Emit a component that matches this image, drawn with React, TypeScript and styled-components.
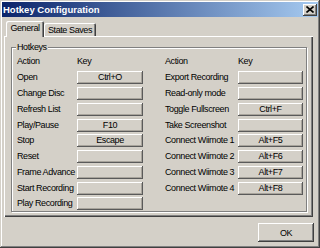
import React from 'react';
import styled, { createGlobalStyle } from 'styled-components';

const Global = createGlobalStyle`
  html, body { margin: 0; padding: 0; background: #d4d0c8; }
  body { font-family: "Liberation Sans", Arial, sans-serif; }
`;

const Window = styled.div`
  box-sizing: border-box;
  width: 320px;
  height: 248px;
  padding: 2px;
  display: flex;
  flex-direction: column;
  background: #d4d0c8;
  color: #000;
  font-size: 9px;
  letter-spacing: -0.4px;
  box-shadow: inset -1px -1px #404040, inset 1px 1px #d4d0c8, inset -2px -2px #808080, inset 2px 2px #ffffff;
`;

const TitleBar = styled.div`
  height: 15px;
  flex: 0 0 15px;
  display: flex;
  align-items: center;
  justify-content: space-between;
  padding: 0 1px;
  background: linear-gradient(to right, #0a246a, #a6caf0);
`;

const Title = styled.span`
  color: #fff;
  font-weight: bold;
  font-size: 9.5px;
  letter-spacing: 0;
  line-height: 15px;
`;

const CloseButton = styled.div`
  box-sizing: border-box;
  width: 14px;
  height: 12px;
  display: flex;
  align-items: center;
  justify-content: center;
  background: #d4d0c8;
  box-shadow: inset -1px -1px #404040, inset 1px 1px #ffffff, inset -2px -2px #808080;
`;

const Content = styled.div`
  display: flex;
  flex-direction: column;
  padding: 4px 5px 0 2px;
`;

const TabStrip = styled.div`
  height: 15px;
  display: flex;
  align-items: flex-end;
  padding-left: 2px;
`;

const Tab = styled.div<{ $active?: boolean; $w: number }>`
  box-sizing: border-box;
  width: ${(p) => p.$w}px;
  height: ${(p) => (p.$active ? 16 : 13)}px;
  margin-bottom: ${(p) => (p.$active ? -1 : 0)}px;
  position: relative;
  z-index: ${(p) => (p.$active ? 2 : 1)};
  display: flex;
  align-items: center;
  justify-content: center;
  padding-bottom: ${(p) => (p.$active ? 2 : 0)}px;
  background: #d4d0c8;
  border-radius: 2px 2px 0 0;
  box-shadow: inset 1px 1px #ffffff, inset -1px 0 #404040, inset -2px 0 #808080;
`;

const Panel = styled.div`
  box-sizing: border-box;
  height: 181px;
  padding: 11px 6px 5px 7px;
  box-shadow: inset 1px 1px #ffffff, inset -1px -1px #404040, inset -2px -2px #808080;
`;

const GroupBox = styled.div`
  box-sizing: border-box;
  position: relative;
  height: 165px;
  border: 1px solid #808080;
  box-shadow: inset 1px 1px #ffffff, 1px 1px #ffffff;
  padding: 4.5px 0 0 5px;
  display: flex;
  gap: 22px;
`;

const GroupLabel = styled.span`
  position: absolute;
  top: -6px;
  left: 4px;
  padding: 0 1px;
  background: #d4d0c8;
  line-height: 11px;
`;

const Column = styled.div<{ $labelW: number; $keyW: number }>`
  display: grid;
  grid-template-columns: ${(p) => p.$labelW}px ${(p) => p.$keyW}px;
  grid-template-rows: 17.5px;
  grid-auto-rows: 15.75px;
  align-items: center;
`;

const Label = styled.span`
  white-space: nowrap;
  line-height: 11px;
`;

const KeyButton = styled.div`
  box-sizing: border-box;
  height: 13px;
  line-height: 13px;
  text-align: center;
  white-space: nowrap;
  background: #d4d0c8;
  box-shadow: inset -1px -1px #5a5a5a, inset 1px 1px #ffffff, inset -2px -2px #a8a49c;
`;

const Footer = styled.div`
  display: flex;
  justify-content: flex-end;
  padding: 6px 4px 0 0;
`;

const OkButton = styled.div`
  box-sizing: border-box;
  width: 56px;
  height: 19px;
  display: flex;
  align-items: center;
  justify-content: center;
  background: #d4d0c8;
  box-shadow: inset -1px -1px #404040, inset 1px 1px #ffffff, inset -2px -2px #808080;
`;

const left: [string, string][] = [
  ['Open', 'Ctrl+O'],
  ['Change Disc', ''],
  ['Refresh List', ''],
  ['Play/Pause', 'F10'],
  ['Stop', 'Escape'],
  ['Reset', ''],
  ['Frame Advance', ''],
  ['Start Recording', ''],
  ['Play Recording', ''],
];

const right: [string, string][] = [
  ['Export Recording', ''],
  ['Read-only mode', ''],
  ['Toggle Fullscreen', 'Ctrl+F'],
  ['Take Screenshot', ''],
  ['Connect Wiimote 1', 'Alt+F5'],
  ['Connect Wiimote 2', 'Alt+F6'],
  ['Connect Wiimote 3', 'Alt+F7'],
  ['Connect Wiimote 4', 'Alt+F8'],
];

function HotkeyColumn({ rows, labelW, keyW }: { rows: [string, string][]; labelW: number; keyW: number }) {
  return (
    <Column $labelW={labelW} $keyW={keyW}>
      <Label>Action</Label>
      <Label>Key</Label>
      {rows.map(([a, k]) => (
        <React.Fragment key={a}>
          <Label>{a}</Label>
          <KeyButton>{k}</KeyButton>
        </React.Fragment>
      ))}
    </Column>
  );
}

export default function App() {
  return (
    <>
      <Global />
      <Window>
        <TitleBar>
          <Title>Hotkey Configuration</Title>
          <CloseButton>
            <svg width="8" height="7" viewBox="0 0 8 7">
              <path d="M0.5 0.5 L7.5 6.5 M7.5 0.5 L0.5 6.5" stroke="#000" strokeWidth="1.6" fill="none" />
            </svg>
          </CloseButton>
        </TitleBar>
        <Content>
          <TabStrip>
            <Tab $active $w={38}>General</Tab>
            <Tab $w={52}>State Saves</Tab>
          </TabStrip>
          <Panel>
            <GroupBox>
              <GroupLabel>Hotkeys</GroupLabel>
              <HotkeyColumn rows={left} labelW={60} keyW={66} />
              <HotkeyColumn rows={right} labelW={73} keyW={65} />
            </GroupBox>
          </Panel>
        </Content>
        <Footer>
          <OkButton>OK</OkButton>
        </Footer>
      </Window>
    </>
  );
}
